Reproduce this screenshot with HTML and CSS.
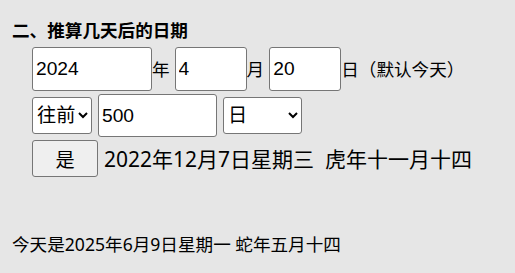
FILE: index.html
```html
<!DOCTYPE html>
<html lang="zh-CN">
<head>
<meta charset="utf-8">
<title>推算几天后的日期</title>
<link rel="stylesheet" href="styles.css">
</head>
<body>
<div class="page">
  <h3 class="title">二、推算几天后的日期</h3>
  <div class="form">
    <div class="row row1">
      <input class="field field-year" type="text" value="2024">
      <span class="unit">年</span>
      <input class="field field-md" type="text" value="4">
      <span class="unit">月</span>
      <input class="field field-md" type="text" value="20">
      <span class="hint">日（默认今天）</span>
    </div>
    <div class="row row2">
      <select class="pick pick-dir">
        <option>往前</option>
        <option>往后</option>
      </select>
      <input class="field field-count" type="text" value="500">
      <select class="pick pick-unit">
        <option>日</option>
        <option>周</option>
        <option>月</option>
        <option>年</option>
      </select>
    </div>
    <div class="row row3">
      <button class="go" type="button">是</button>
      <span class="result">2022年12月7日星期三&nbsp; 虎年十一月十四</span>
    </div>
  </div>
  <p class="today">今天是2025年6月9日星期一 蛇年五月十四</p>
</div>
</body>
</html>
```

FILE: styles.css
```css
html, body {
  margin: 0;
  padding: 0;
  background: #e6e6e6;
}

body {
  font-family: "Noto Sans", "Noto Sans CJK SC", sans-serif;
  font-size: 17.6px;
  color: #000;
}

.page {
  padding: 18px 0 0 12px;
}

.title {
  margin: 0;
  font-size: 17.6px;
  font-weight: bold;
  line-height: 24px;
  height: 24px;
}

.form {
  margin: 5px 0 0 20px;
}

.row {
  display: flex;
  align-items: center;
}

.row1 {
  height: 44px;
}

.row2 {
  height: 43px;
  margin-top: 3px;
}

.row3 {
  height: 37px;
  margin-top: 3px;
}

.field {
  box-sizing: border-box;
  margin: 0;
  border: 1px solid #767676;
  border-radius: 3px;
  background: #fff;
  padding: 0 3px;
  font-family: "Liberation Sans", "Noto Sans CJK SC", sans-serif;
  font-size: 19.2px;
  color: #000;
}

.field-year {
  width: 120px;
  height: 44px;
}

.field-md {
  width: 72px;
  height: 44px;
}

.field-count {
  width: 119px;
  height: 43px;
  margin: 0 6px;
}

.unit {
  line-height: 24px;
  margin-right: 5px;
}

.hint {
  line-height: 24px;
}

.pick {
  box-sizing: border-box;
  margin: 0;
  height: 37px;
  border: 1px solid #767676;
  border-radius: 3px;
  background-color: #fff;
  font-family: "Liberation Sans", "Noto Sans CJK SC", sans-serif;
  font-size: 19.2px;
  color: #000;
}

.pick-dir {
  width: 60px;
}

.pick-unit {
  width: 79px;
}

.go {
  box-sizing: border-box;
  margin: 0;
  width: 66px;
  height: 37px;
  border: 1px solid #767676;
  border-radius: 3px;
  background: #efefef;
  font-family: "Liberation Sans", "Noto Sans CJK SC", sans-serif;
  font-size: 19.2px;
  color: #000;
  padding: 0;
}

.result {
  margin-left: 6px;
  font-size: 21px;
  line-height: 28px;
}

.today {
  margin: 55px 0 0 0;
  line-height: 24px;
}
```
